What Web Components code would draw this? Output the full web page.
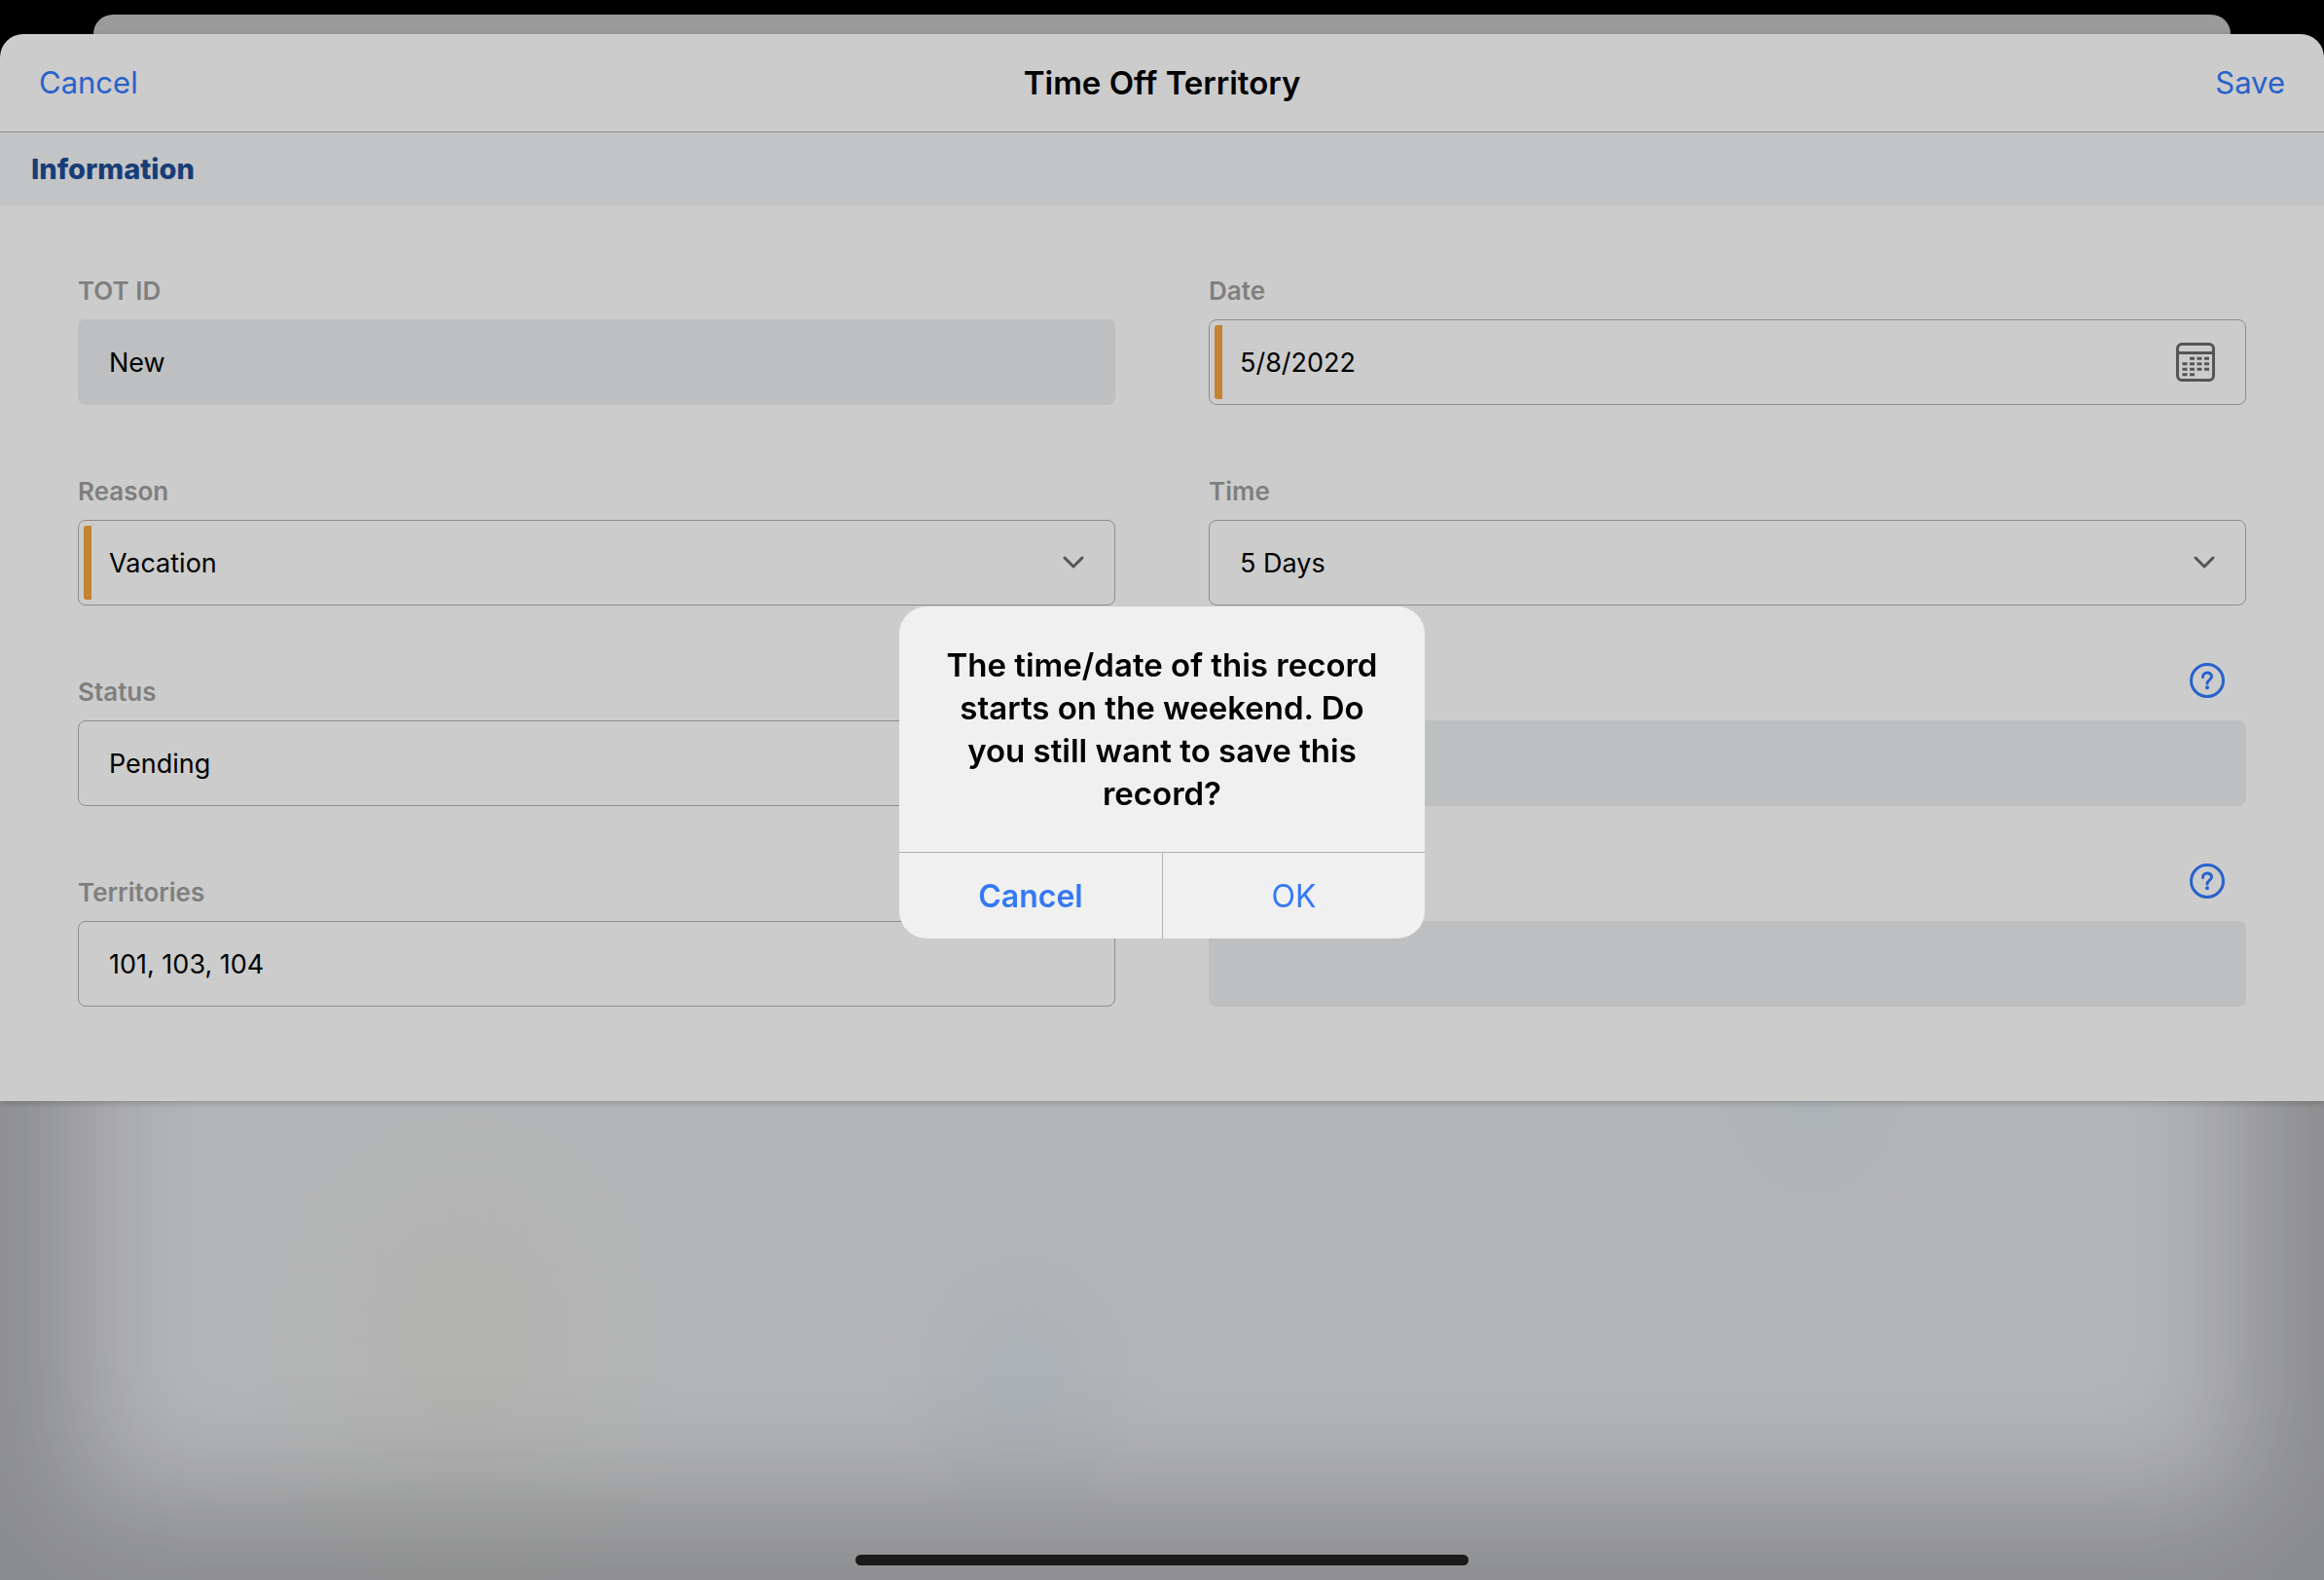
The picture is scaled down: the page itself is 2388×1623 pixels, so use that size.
<!DOCTYPE html>
<html lang="en">
<head>
<meta charset="UTF-8">
<meta name="viewport" content="width=device-width, initial-scale=1.0">
<title>Time Off Territory</title>
<style>
  body {
    margin: 0;
    background: #000;
    color: #000;
    font-family: Inter, "Liberation Sans", sans-serif;
  }
</style>
</head>
<body>
<tot-screen>
  <tot-sheet heading="Time Off Territory">
    <form-section heading="Information">
      <form-field label="TOT ID" value="New" type="text" readonly></form-field>
      <form-field label="Date" value="5/8/2022" type="date" required></form-field>
      <form-field label="Reason" value="Vacation" type="select" required></form-field>
      <form-field label="Time" value="5 Days" type="select"></form-field>
      <form-field label="Status" value="Pending" type="select"></form-field>
      <form-field type="text" readonly><help-button slot="help"></help-button></form-field>
      <form-field label="Territories" value="101, 103, 104" type="text"></form-field>
      <form-field type="text" readonly><help-button slot="help"></help-button></form-field>
    </form-section>
  </tot-sheet>
  <confirm-alert slot="alert">The time/date of this record starts on the weekend. Do you still want to save this record?</confirm-alert>
</tot-screen>

<script>
class TotScreen extends HTMLElement {
  constructor() {
    super();
    this.attachShadow({ mode: "open" });
    this.shadowRoot.innerHTML = `
      <style>
        :host {
          display: flex;
          flex-direction: column;
          position: relative;
          min-height: 100vh;
          padding-top: 15px;
          box-sizing: border-box;
          overflow: hidden;
        }

        .previous {
          height: 20px;
          margin: 0 96px;
          border-radius: 20px 20px 0 0;
          background: #9b9b9b;
        }

        /* Blurred page behind the sheet */
        .backdrop {
          position: absolute;
          inset: 60px 0 0;
          background:
            radial-gradient(ellipse 130px 170px at 78% 1050px, rgba(164, 176, 182, 0.5), transparent),
            radial-gradient(ellipse 150px 170px at 44% 1355px, rgba(162, 173, 180, 0.5), transparent),
            radial-gradient(ellipse 240px 280px at 20% 1310px, rgba(175, 177, 168, 0.5), transparent),
            #b4b5b7;
          box-shadow: inset 0 0 130px 80px rgba(0, 0, 0, 0.23);
        }

        .content {
          position: relative;
          flex: 1;
        }

        .home {
          position: relative;
          width: 630px;
          max-width: 60%;
          height: 11px;
          margin: 0 auto 15px;
          border-radius: 6px;
          background: #1b1b1b;
        }
      </style>

      <div class="previous"></div>
      <div class="backdrop"></div>
      <main class="content"><slot></slot></main>
      <div class="home"></div>
      <slot name="alert"></slot>
    `;
  }
}

class TotSheet extends HTMLElement {
  constructor() {
    super();
    this.attachShadow({ mode: "open" });
    this.shadowRoot.innerHTML = `
      <style>
        :host {
          display: block;
          background: #ccc;
          border-radius: 24px 24px 0 0;
          box-shadow: 0 2px 6px rgba(0, 0, 0, 0.2);
        }

        header {
          display: grid;
          grid-template-columns: 1fr auto 1fr;
          align-items: center;
          height: 100px;
          padding: 0 40px;
          border-bottom: 1px solid #8a8b8d;
        }

        h1 {
          margin: 0;
          font-size: 33px;
          font-weight: 600;
          line-height: 44px;
        }

        button {
          justify-self: start;
          padding: 0;
          border: 0;
          background: none;
          color: #2862cb;
          font: inherit;
          font-size: 31px;
          line-height: 44px;
          cursor: pointer;
        }

        .save {
          justify-self: end;
        }
      </style>

      <header>
        <button type="button">Cancel</button>
        <h1>${this.getAttribute("heading")}</h1>
        <button type="button" class="save">Save</button>
      </header>
      <slot></slot>
    `;
  }
}

class FormSection extends HTMLElement {
  constructor() {
    super();
    this.attachShadow({ mode: "open" });
    this.shadowRoot.innerHTML = `
      <style>
        :host {
          display: block;
        }

        h2 {
          margin: 0;
          padding: 0 32px;
          background: #c3c4c6;
          color: #173d77;
          font-size: 29px;
          font-weight: 800;
          line-height: 75px;
        }

        .fields {
          display: grid;
          grid-template-columns: 1fr 1fr;
          gap: 72px 96px;
          padding: 71px 80px 97px;
        }

        @media (max-width: 900px) {
          .fields {
            grid-template-columns: 1fr;
            padding: 72px 32px;
          }
        }
      </style>

      <h2>${this.getAttribute("heading")}</h2>
      <div class="fields"><slot></slot></div>
    `;
  }
}

class FormField extends HTMLElement {
  constructor() {
    super();
    this.attachShadow({ mode: "open" });
    const label = this.getAttribute("label") || "";
    const value = this.getAttribute("value") || "";
    const type = this.getAttribute("type");
    const readonly = this.hasAttribute("readonly") ? "readonly" : "";
    const required = this.hasAttribute("required") ? "required" : "";

    let control = `<input id="control" type="text" value="${value}" ${readonly} ${required} ${label ? "" : 'aria-label="Details"'}>`;
    if (type === "select") {
      control = `
        <select id="control" ${required}><option>${value}</option></select>
        <svg class="chevron" width="22" height="14" viewBox="0 0 22 14" aria-hidden="true">
          <path d="M2 2l9 9 9-9" fill="none" stroke="#555" stroke-width="3" stroke-linecap="round" stroke-linejoin="round"/>
        </svg>`;
    }
    if (type === "date") {
      control += `
        <button type="button" aria-label="Choose date">
          <svg width="40" height="40" viewBox="0 0 40 40">
            <rect x="1.5" y="1.5" width="37" height="37" rx="4.5" fill="none" stroke="#555" stroke-width="3"/>
            <path d="M2 10.5h36" stroke="#555" stroke-width="3"/>
            <path d="M14 16.2h20M6.5 21.7h27.5M6.5 27.2h27.5M6.5 32.7h12.5" stroke="#555" stroke-width="3" stroke-dasharray="5 2.5"/>
          </svg>
        </button>`;
    }

    this.shadowRoot.innerHTML = `
      <style>
        :host {
          display: block;
          min-width: 0;
        }

        .top {
          display: flex;
          justify-content: space-between;
          height: 34px;
          margin-bottom: 12px;
        }

        label {
          color: #7f7f7f;
          font-size: 26px;
          font-weight: 600;
          line-height: 34px;
        }

        ::slotted(help-button) {
          align-self: flex-end;
          margin: 0 22px 11px auto;
        }

        .box {
          display: grid;
          grid-template-columns: 1fr auto;
          align-items: center;
          position: relative;
          height: 88px;
          box-sizing: border-box;
          border: 1px solid #8c8c8c;
          border-radius: 8px;
        }

        :host([readonly]) .box {
          border-color: transparent;
          background: #bdbfc1;
        }

        :host([required]) .box::before {
          content: "";
          position: absolute;
          inset: 5px auto 5px 5px;
          width: 8px;
          border-radius: 3px 0 0 3px;
          background: #c38331;
        }

        input,
        select {
          grid-area: 1 / 1;
          width: 100%;
          height: 86px;
          margin: 0;
          padding: 0 31px;
          box-sizing: border-box;
          border: 0;
          outline: 0;
          appearance: none;
          background: none;
          color: #000;
          font: inherit;
          font-size: 27px;
        }

        select {
          grid-column: 1 / 3;
        }

        .chevron {
          grid-area: 1 / 2;
          margin-right: 31px;
          pointer-events: none;
        }

        button {
          display: flex;
          margin-right: 31px;
          padding: 0;
          border: 0;
          background: none;
          cursor: pointer;
        }
      </style>

      <div class="top">
        ${label ? `<label for="control">${label}</label>` : ""}
        <slot name="help"></slot>
      </div>
      <div class="box">${control}</div>
    `;
  }
}

class HelpButton extends HTMLElement {
  constructor() {
    super();
    this.attachShadow({ mode: "open" });
    this.shadowRoot.innerHTML = `
      <style>
        :host {
          display: block;
        }

        button {
          display: block;
          padding: 0;
          border: 0;
          background: none;
          cursor: pointer;
        }

        svg {
          display: block;
        }
      </style>

      <button type="button" aria-label="Help">
        <svg width="36" height="36" viewBox="0 0 36 36" fill="none" stroke="#2862cb" stroke-width="3">
          <circle cx="18" cy="18" r="16.5"/>
          <path d="M13.5 14.5c0-6 9-5.800 9-.6 0 3.400-4.500 3.500-4.500 7.100" stroke-linecap="round"/>
          <circle cx="18" cy="25.3" r="2" fill="#2862cb" stroke="none"/>
        </svg>
      </button>
    `;
  }
}

class ConfirmAlert extends HTMLElement {
  constructor() {
    super();
    this.attachShadow({ mode: "open" });
    this.shadowRoot.innerHTML = `
      <style>
        :host {
          position: fixed;
          inset: 0;
          display: grid;
          place-items: center;
          padding-bottom: 36px;
        }

        .alert {
          width: 540px;
          max-width: 90%;
          overflow: hidden;
          border-radius: 28px;
          background: #f0f0f0;
        }

        p {
          margin: 0;
          padding: 38px 48px;
          font-size: 33px;
          font-weight: 600;
          line-height: 44px;
          text-align: center;
        }

        .actions {
          display: grid;
          grid-template-columns: 1fr 1fr;
          border-top: 1px solid #b0b0b1;
        }

        button {
          height: 88px;
          padding: 0;
          border: 0;
          background: none;
          color: #3478f6;
          font: inherit;
          font-size: 32px;
          cursor: pointer;
        }

        .cancel {
          font-weight: 600;
        }

        .ok {
          border-left: 1px solid #b0b0b1;
        }
      </style>

      <div class="alert" role="alertdialog" aria-modal="true" aria-labelledby="message">
        <p id="message"><slot></slot></p>
        <div class="actions">
          <button type="button" class="cancel">Cancel</button>
          <button type="button" class="ok">OK</button>
        </div>
      </div>
    `;
  }
}

customElements.define("tot-screen", TotScreen);
customElements.define("tot-sheet", TotSheet);
customElements.define("form-section", FormSection);
customElements.define("form-field", FormField);
customElements.define("help-button", HelpButton);
customElements.define("confirm-alert", ConfirmAlert);
</script>
</body>
</html>
